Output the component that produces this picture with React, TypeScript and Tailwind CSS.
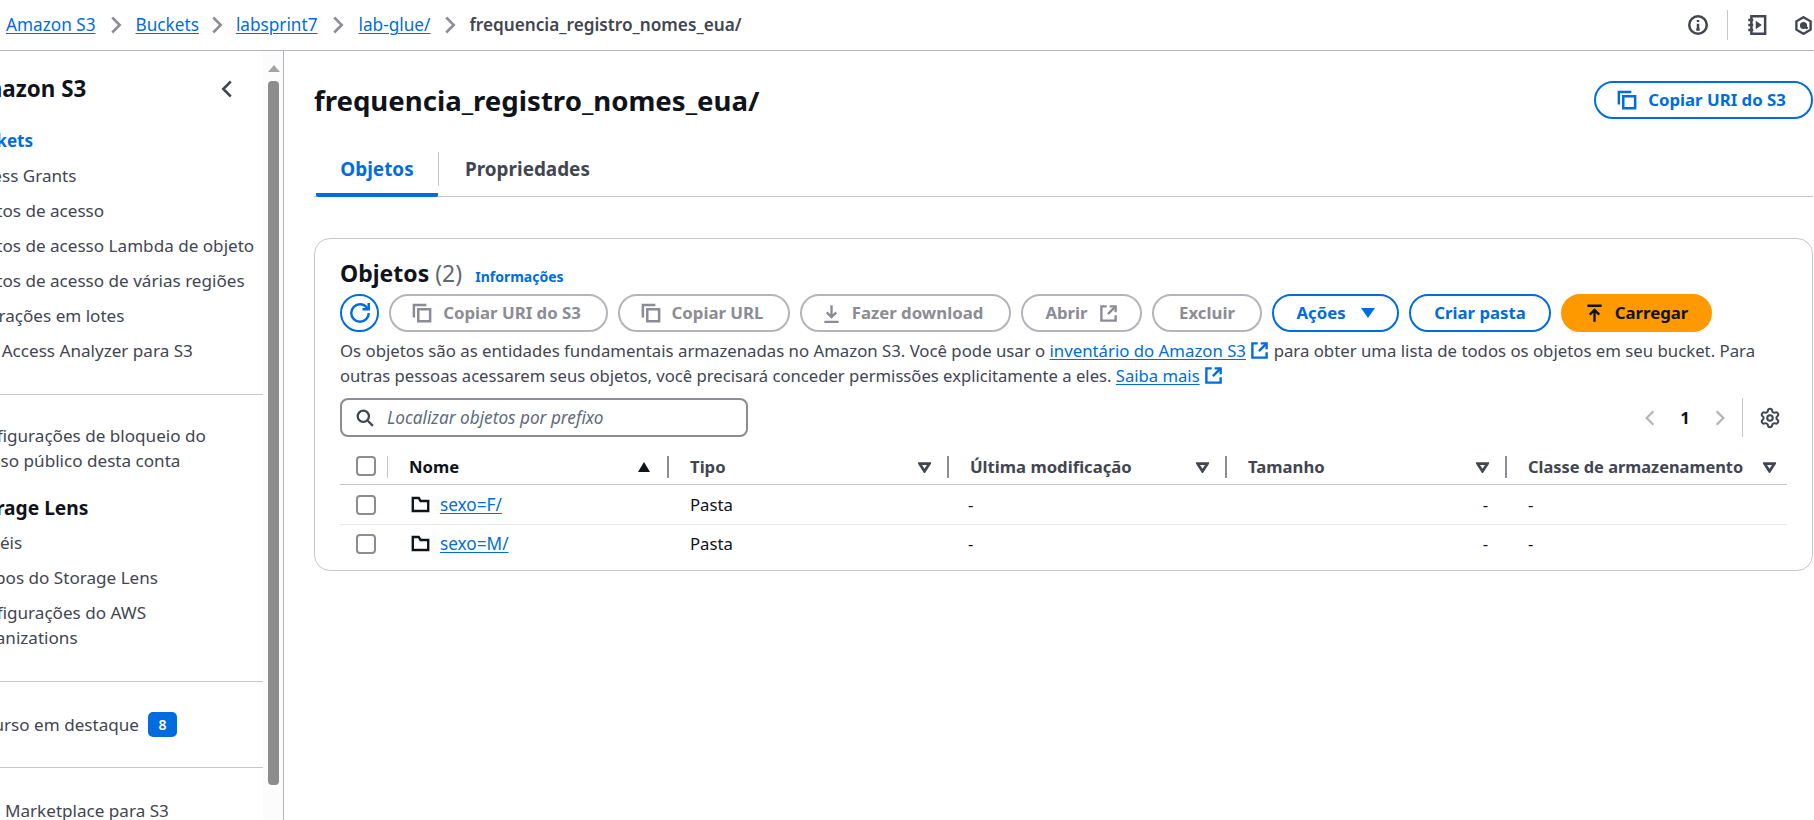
import { ReactNode } from 'react';
import { Settings } from 'lucide-react';

const ICON = 'fill-none stroke-current stroke-2';

function Svg({ className = '', children }: { className?: string; children: ReactNode }) {
  return (
    <svg viewBox="0 0 16 16" className={`${ICON} shrink-0 ${className}`}>
      {children}
    </svg>
  );
}

const CopyIcon = ({ className }: { className?: string }) => (
  <Svg className={className}>
    <path d="M5 5h9.500v9.500H5z" />
    <path d="M1.500 11.500V1.500h10" />
  </Svg>
);

const ExternalIcon = ({ className }: { className?: string }) => (
  <Svg className={className}>
    <path d="M6.500 2H2v12h12V9.500" />
    <path d="M9 2h5v5" />
    <path d="M14 2 7.500 8.500" />
  </Svg>
);

const FolderIcon = () => (
  <Svg className="w-[19px] h-[19px] text-[#0f141a]">
    <path d="M1.500 2.500h5l1.500 2.500h6.500v8.500h-13z" />
  </Svg>
);

const Chevron = () => (
  <svg viewBox="0 0 16 16" className="w-[20px] h-[20px] shrink-0 fill-none stroke-[#8c8c94] stroke-2">
    <path d="m5 2 6 6-6 6" />
  </svg>
);

const Crumb = ({ children }: { children: ReactNode }) => (
  <a className="text-[#006ce0] underline underline-offset-2 decoration-1">{children}</a>
);

function TopBar() {
  return (
    <header className="h-[51px] shrink-0 flex items-center border-b border-[#b4b4bb] pl-[6px] text-[17.2px]">
      <Crumb>Amazon S3</Crumb>
      <div className="w-[40px] flex justify-center"><Chevron /></div>
      <Crumb>Buckets</Crumb>
      <div className="w-[37px] flex justify-center"><Chevron /></div>
      <Crumb>labsprint7</Crumb>
      <div className="w-[41px] flex justify-center"><Chevron /></div>
      <Crumb>lab-glue/</Crumb>
      <div className="w-[39px] flex justify-center"><Chevron /></div>
      <span className="text-[#424650] font-semibold">frequencia_registro_nomes_eua/</span>
      <div className="ml-auto flex items-center text-[#424650]">
        <Svg className="w-[20px] h-[20px]">
          <circle cx="8" cy="8" r="7" />
          <path d="M8 7v4.500M6.600 11.500h2.800M8 4v1.600" />
        </Svg>
        <div className="w-px h-[30px] bg-[#c6c6cd] mx-[19px]" />
        <Svg className="w-[20px] h-[20px]">
          <path d="M3.500 1h11v14h-11zM1 4h4M1 8h4M1 12h4" />
          <path d="M7.500 5.500v5l3.500-2.500z" className="fill-current stroke-1" />
        </Svg>
        <Svg className="w-[19px] h-[19px] ml-[27px] mr-[1px]">
          <path d="M8 1l6 3.500v7L8 15l-6-3.500v-7z" />
          <circle cx="8" cy="8" r="2" className="fill-current" />
          <path d="M8 8l3.500 2.500" />
        </Svg>
      </div>
    </header>
  );
}

function NavItem({ children, className = '' }: { children: ReactNode; className?: string }) {
  return <div className={`leading-[25px] mb-[10px] whitespace-nowrap ${className}`}>{children}</div>;
}

function Sidebar() {
  return (
    <aside className="w-[284px] shrink-0 flex border-r border-[#b4b4bb] overflow-hidden">
      <div className="w-[263px] shrink-0 overflow-hidden">
        <nav className="-ml-[35px] w-[298px] pt-[25px] text-[17.1px] text-[#424650]">
          <div className="flex items-center justify-between pr-[26px] h-[26px] mb-[26px]">
            <span className="text-[22.4px] font-bold text-[#0f141a]">Amazon S3</span>
            <svg viewBox="0 0 16 16" className="w-[20px] h-[20px] fill-none stroke-[#424650] stroke-2">
              <path d="m11 2-6 6 6 6" />
            </svg>
          </div>
          <NavItem className="text-[#006ce0] font-bold">Buckets</NavItem>
          <NavItem>Access Grants</NavItem>
          <NavItem>Pontos de acesso</NavItem>
          <NavItem>Pontos de acesso Lambda de objeto</NavItem>
          <NavItem>Pontos de acesso de várias regiões</NavItem>
          <NavItem>Operações em lotes</NavItem>
          <NavItem>IAM Access Analyzer para S3</NavItem>
          <hr className="border-[#c6c6cd] mt-[31px] mb-[28px]" />
          <div className="leading-[25px] mb-[22px]">
            <div className="whitespace-nowrap">Configurações de bloqueio do</div>
            <div className="whitespace-nowrap">acesso público desta conta</div>
          </div>
          <NavItem className="font-bold text-[#0f141a] text-[19.2px]">Storage Lens</NavItem>
          <NavItem>Painéis</NavItem>
          <NavItem>Grupos do Storage Lens</NavItem>
          <div className="leading-[25px]">
            <div className="whitespace-nowrap">Configurações do AWS</div>
            <div className="whitespace-nowrap">Organizations</div>
          </div>
          <hr className="border-[#c6c6cd] mt-[31px] mb-[30px]" />
          <div className="flex items-center gap-[9px] h-[25px] whitespace-nowrap">
            <span>Recurso em destaque</span>
            <span className="w-[29px] h-[25px] rounded-[5px] bg-[#006ce0] text-white text-[14px] font-semibold flex items-center justify-center">8</span>
          </div>
          <hr className="border-[#c6c6cd] mt-[30px] mb-[30px]" />
          <div className="whitespace-nowrap leading-[25px]">AWS Marketplace para S3</div>
        </nav>
      </div>
      <div className="flex-1 flex flex-col items-end pr-[4px] pt-[14px] bg-[#fcfcfc]">
        <div className="w-0 h-0 mr-[-1px] border-x-[6px] border-x-transparent border-b-[7px] border-b-[#a3a3a3] mb-[9px]" />
        <div className="w-[11px] h-[704px] rounded-[4px] bg-[#8c8c8c]" />
      </div>
    </aside>
  );
}

function Pill({
  children,
  width,
  tone = 'off',
}: {
  children: ReactNode;
  width: string;
  tone?: 'off' | 'blue' | 'primary';
}) {
  const look =
    tone === 'off'
      ? 'border-[#b4b4bb] text-[#8c8c94]'
      : tone === 'blue'
        ? 'border-[#006ce0] text-[#006ce0]'
        : 'border-[#ff9900] bg-[#ff9900] text-[#0f141a]';
  return (
    <button className={`h-[38px] shrink-0 rounded-full border-2 font-bold text-[16.8px] flex items-center justify-center gap-[11px] whitespace-nowrap ${width} ${look}`}>
      {children}
    </button>
  );
}

function SortDown() {
  return (
    <svg viewBox="0 0 12 10" className="w-[13px] h-[11px] fill-none stroke-[#424650] stroke-[2.5]">
      <path d="M1.500 1.500h9L6 8.500z" />
    </svg>
  );
}

function HeadCell({ label, first = false, active = false }: { label: string; first?: boolean; active?: boolean }) {
  return (
    <div className="flex items-center h-[22px] pr-[18px] pl-[21px] relative">
      <span className={`font-bold whitespace-nowrap ${first ? 'text-[#0f141a]' : 'text-[#424650]'}`}>{label}</span>
      <span className="ml-auto flex">
        {active ? (
          <svg viewBox="0 0 12 10" className="w-[14px] h-[10px] fill-[#0f141a]">
            <path d="M6 0l6 10H0z" />
          </svg>
        ) : (
          <SortDown />
        )}
      </span>
      <span className="absolute right-0 top-0 w-[2px] h-[22px] bg-[#8c8c94]" />
    </div>
  );
}

const COLS = 'grid grid-cols-[48px_281px_280px_278px_280px_280px]';

function Row({ name, last = false }: { name: string; last?: boolean }) {
  return (
    <div className={`${COLS} items-center text-[#0f141a] ${last ? 'h-[37px]' : 'h-[40px] border-b border-[#e8e8ea]'}`}>
      <div className="pl-[16px]">
        <div className="w-[20px] h-[20px] rounded-[4px] border-2 border-[#8c8c94]" />
      </div>
      <div className="pl-[23px] flex items-center gap-[10px]">
        <FolderIcon />
        <a className="text-[#006ce0] text-[17.2px] underline underline-offset-2 decoration-1">{name}</a>
      </div>
      <div className="pl-[21px]">Pasta</div>
      <div className="pl-[19px]">-</div>
      <div className="text-right pr-[19px]">-</div>
      <div className="pl-[21px]">-</div>
    </div>
  );
}

function ObjectsCard() {
  return (
    <section className="h-[333px] rounded-[16px] border border-[#c6c6cd] pt-[20px] pl-[25px] pr-[25px] text-[16.7px] text-[#424650]">
      <div className="flex items-baseline h-[29px]">
        <h2 className="text-[23px] font-bold text-[#0f141a] leading-[29px]">Objetos</h2>
        <span className="text-[23px] ml-[6px] text-[#5f6b7a] leading-[29px]">(2)</span>
        <a className="ml-[13px] text-[14px] font-bold text-[#006ce0]">Informações</a>
      </div>
      <div className="flex gap-[10px] mt-[6px]">
        <button className="w-[39px] h-[38px] shrink-0 rounded-full border-2 border-[#006ce0] text-[#006ce0] flex items-center justify-center">
          <Svg className="w-[20px] h-[20px]">
            <path d="M10 5h5V0" />
            <path d="M15 8a7 7 0 1 1-7-7c2.440 0 4.890 1.600 6.280 3.500" />
          </Svg>
        </button>
        <Pill width="w-[219px] pr-[4px]"><CopyIcon className="w-[20px] h-[20px]" />Copiar URI do S3</Pill>
        <Pill width="w-[172px] pr-[4px]"><CopyIcon className="w-[20px] h-[20px]" />Copiar URL</Pill>
        <Pill width="w-[211px] pr-[6px]">
          <Svg className="w-[19px] h-[19px]"><path d="M8 1v9.500M4 7l4 4 4-4M2 15h12" /></Svg>
          Fazer download
        </Pill>
        <Pill width="w-[121px]">Abrir<ExternalIcon className="w-[19px] h-[19px]" /></Pill>
        <Pill width="w-[110px]">Excluir</Pill>
        <Pill width="w-[127px]" tone="blue">
          Ações
          <svg viewBox="0 0 14 10" className="w-[14px] h-[10px] fill-[#006ce0] ml-[4px]"><path d="M0 0h14L7 10z" /></svg>
        </Pill>
        <Pill width="w-[142px]" tone="blue">Criar pasta</Pill>
        <Pill width="w-[151px]" tone="primary">
          <Svg className="w-[19px] h-[19px]"><path d="M2 1.500h12M8 15V5M4 9l4-4 4 4" /></Svg>
          Carregar
        </Pill>
      </div>
      <p className="leading-[25px] mt-[6px] whitespace-nowrap">
        <span className="text-[16.78px]">
          Os objetos são as entidades fundamentais armazenadas no Amazon S3. Você pode usar o{' '}
          <a className="text-[#006ce0] underline underline-offset-2 decoration-1">inventário do Amazon S3</a>{' '}
          <ExternalIcon className="inline w-[19px] h-[19px] text-[#006ce0] align-[-3px]" /> para obter uma lista de todos os objetos em seu bucket. Para
        </span>
        <br />
        <span className="text-[16.65px]">
          outras pessoas acessarem seus objetos, você precisará conceder permissões explicitamente a eles.{' '}
          <a className="text-[#006ce0] underline underline-offset-2 decoration-1">Saiba mais</a>{' '}
          <ExternalIcon className="inline w-[19px] h-[19px] text-[#006ce0] align-[-3px]" />
        </span>
      </p>
      <div className="flex items-center mt-[10px]">
        <div className="w-[408px] h-[39px] rounded-[8px] border-2 border-[#8c8c94] flex items-center pl-[14px] gap-[13px]">
          <Svg className="w-[18px] h-[18px] text-[#424650]">
            <circle cx="6.500" cy="6.500" r="5" />
            <path d="m10.500 10.500 4.500 4.500" />
          </Svg>
          <span className="italic text-[17.2px] text-[#5f6b7a] whitespace-nowrap">Localizar objetos por prefixo</span>
        </div>
        <div className="ml-auto flex items-center text-[#b4b4bb]">
          <svg viewBox="0 0 16 16" className="w-[18px] h-[18px] fill-none stroke-current stroke-2"><path d="m11 2-6 6 6 6" /></svg>
          <span className="w-[52px] text-center font-bold text-[#0f141a]">1</span>
          <svg viewBox="0 0 16 16" className="w-[18px] h-[18px] fill-none stroke-current stroke-2"><path d="m5 2 6 6-6 6" /></svg>
          <div className="w-px h-[39px] bg-[#c6c6cd] ml-[13px] mr-[16px]" />
          <Settings className="w-[22px] h-[22px] text-[#424650] mr-[6px]" strokeWidth={2.2} />
        </div>
      </div>
      <div className="mt-[19px]">
        <div className={`${COLS} h-[29px] border-b border-[#c6c6cd]`}>
          <div className="pl-[16px] relative">
            <div className="w-[20px] h-[20px] rounded-[4px] border-2 border-[#8c8c94]" />
            <span className="absolute left-[47px] top-0 w-px h-[22px] bg-[#c6c6cd]" />
          </div>
          <HeadCell label="Nome" first active />
          <HeadCell label="Tipo" />
          <HeadCell label="Última modificação" />
          <HeadCell label="Tamanho" />
          <div className="flex items-center h-[22px] pr-[11px] pl-[21px]">
            <span className="font-bold whitespace-nowrap text-[#424650] text-[16.4px]">Classe de armazenamento</span>
            <span className="ml-auto flex"><SortDown /></span>
          </div>
        </div>
        <Row name="sexo=F/" />
        <Row name="sexo=M/" last />
      </div>
    </section>
  );
}

export default function App() {
  return (
    <div className="h-[820px] w-[1814px] overflow-hidden bg-white flex flex-col font-['Noto_Sans',sans-serif]">
      <TopBar />
      <div className="flex-1 flex min-h-0">
        <Sidebar />
        <main className="flex-1 pl-[30px] pr-[1px] min-w-0">
          <div className="flex items-center justify-between h-[38px] mt-[30px]">
            <h1 className="text-[27.6px] font-bold text-[#0f141a] leading-none pt-[2px]">frequencia_registro_nomes_eua/</h1>
            <button className="w-[219px] h-[38px] rounded-full border-2 border-[#006ce0] text-[#006ce0] font-bold text-[16.8px] flex items-center justify-center gap-[11px] pr-[4px]">
              <CopyIcon className="w-[20px] h-[20px]" />
              Copiar URI do S3
            </button>
          </div>
          <div className="flex h-[48px] mt-[30px] border-b border-[#c6c6cd]">
            <div className="w-[122px] ml-[2px] h-[48px] pb-[4px] flex items-center justify-center text-[18.9px] font-bold text-[#006ce0] border-b-[4px] border-[#006ce0] rounded-b-[2px] relative">
              Objetos
              <span className="absolute -right-px top-[3px] w-px h-[34px] bg-[#c6c6cd]" />
            </div>
            <div className="pl-[27px] h-[48px] pb-[8px] flex items-center text-[18.9px] font-bold text-[#424650]">Propriedades</div>
          </div>
          <div className="mt-[41px]">
            <ObjectsCard />
          </div>
        </main>
      </div>
    </div>
  );
}
